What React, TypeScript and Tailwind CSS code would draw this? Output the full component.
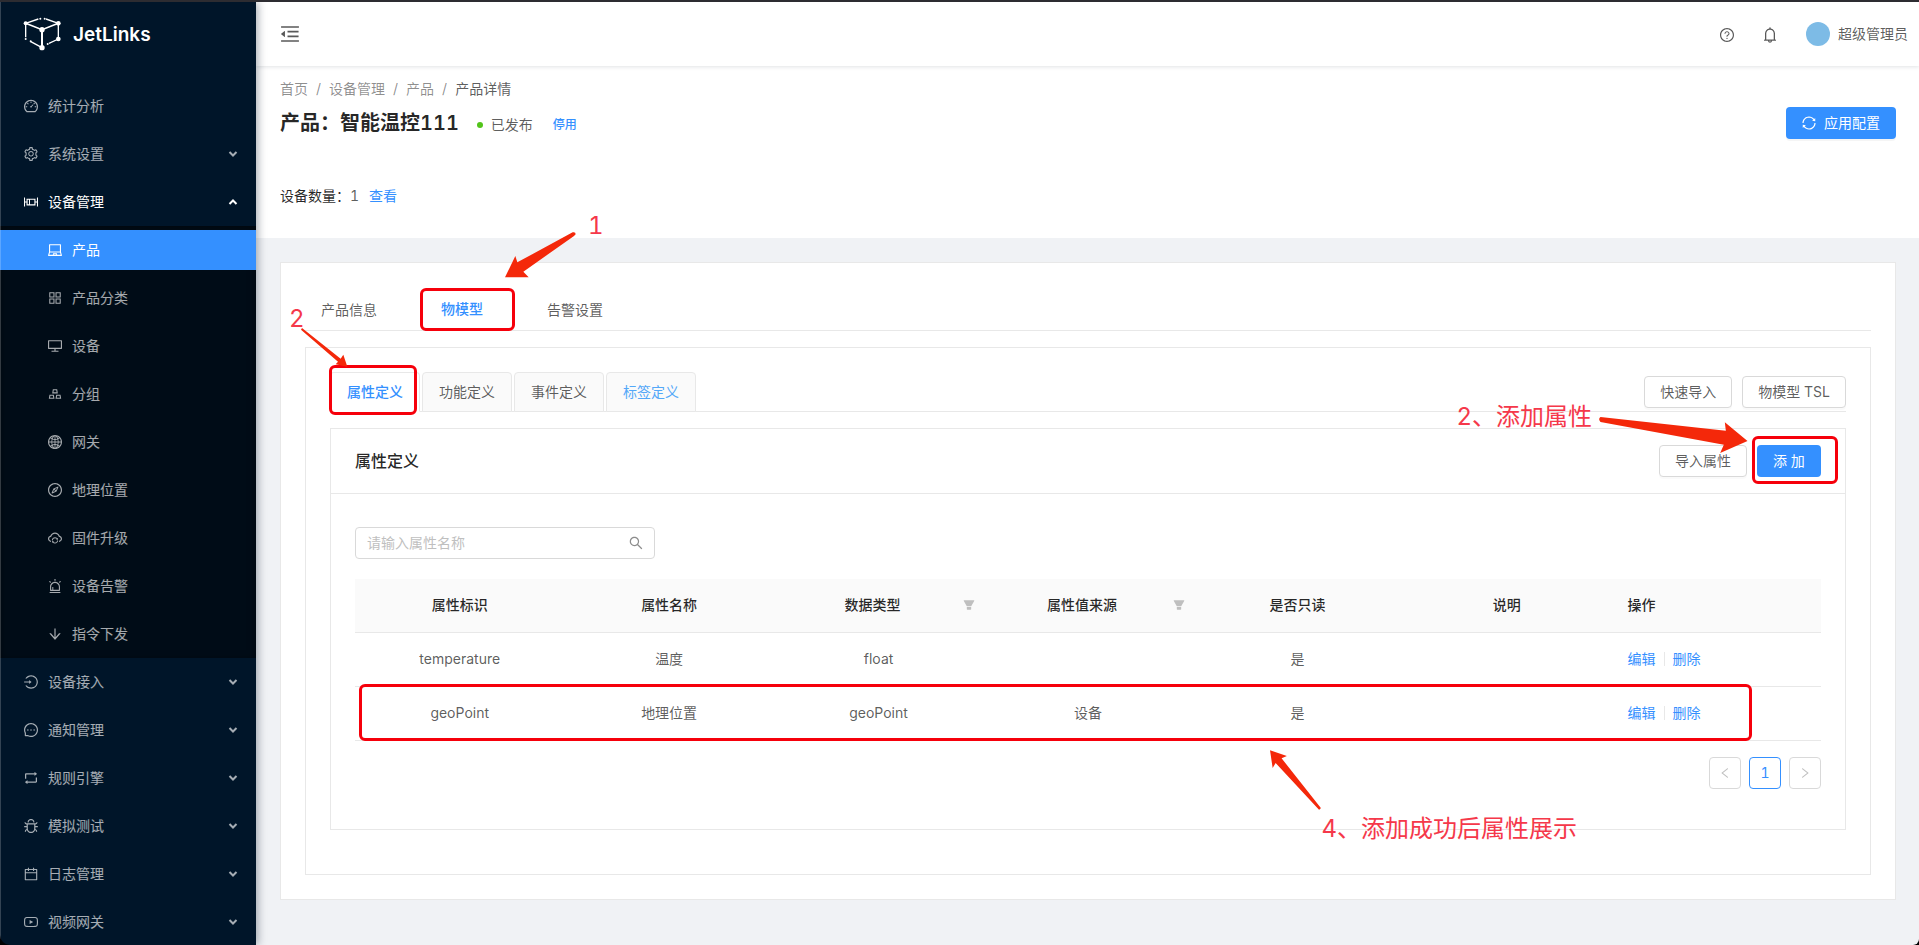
import React from 'react';
import type { IconType } from 'react-icons';
import {
  AiFillFilter,
  AiOutlineAlert,
  AiOutlineAppstore,
  AiOutlineArrowDown,
  AiOutlineBell,
  AiOutlineBoxPlot,
  AiOutlineBug,
  AiOutlineCalendar,
  AiOutlineCloudSync,
  AiOutlineCompass,
  AiOutlineDashboard,
  AiOutlineDesktop,
  AiOutlineGlobal,
  AiOutlineGold,
  AiOutlineLaptop,
  AiOutlineLeft,
  AiOutlineLogin,
  AiOutlineMenuFold,
  AiOutlineMessage,
  AiOutlineQuestionCircle,
  AiOutlineRetweet,
  AiOutlineRight,
  AiOutlineSearch,
  AiOutlineSetting,
  AiOutlineSync,
  AiOutlineYoutube,
} from 'react-icons/ai';

interface MenuEntry {
  label: string;
  icon: IconType;
  active?: boolean;
  open?: boolean;
  leaf?: boolean;
  children?: MenuEntry[];
}

interface Property {
  id: string;
  name: string;
  type: string;
  source: string;
  readOnly: string;
  description: string;
}

const menu: MenuEntry[] = [
  { label: '统计分析', icon: AiOutlineDashboard, leaf: true },
  { label: '系统设置', icon: AiOutlineSetting },
  {
    label: '设备管理',
    icon: AiOutlineBoxPlot,
    open: true,
    children: [
      { label: '产品', icon: AiOutlineLaptop, active: true },
      { label: '产品分类', icon: AiOutlineAppstore },
      { label: '设备', icon: AiOutlineDesktop },
      { label: '分组', icon: AiOutlineGold },
      { label: '网关', icon: AiOutlineGlobal },
      { label: '地理位置', icon: AiOutlineCompass },
      { label: '固件升级', icon: AiOutlineCloudSync },
      { label: '设备告警', icon: AiOutlineAlert },
      { label: '指令下发', icon: AiOutlineArrowDown },
    ],
  },
  { label: '设备接入', icon: AiOutlineLogin },
  { label: '通知管理', icon: AiOutlineMessage },
  { label: '规则引擎', icon: AiOutlineRetweet },
  { label: '模拟测试', icon: AiOutlineBug },
  { label: '日志管理', icon: AiOutlineCalendar },
  { label: '视频网关', icon: AiOutlineYoutube },
];

const properties: Property[] = [
  { id: 'temperature', name: '温度', type: 'float', source: '', readOnly: '是', description: '' },
  { id: 'geoPoint', name: '地理位置', type: 'geoPoint', source: '设备', readOnly: '是', description: '' },
];

const columns = [
  { title: '属性标识' },
  { title: '属性名称' },
  { title: '数据类型', filter: true },
  { title: '属性值来源', filter: true },
  { title: '是否只读' },
  { title: '说明' },
];

const Icon: React.FC<{ icon: IconType; size?: number }> = ({ icon: Glyph, size = 14 }) => (
  <Glyph size={size} viewBox="64 64 896 896" className="shrink-0" aria-hidden="true" />
);

const Logo: React.FC = () => (
  <svg width="38" height="34" viewBox="70 51 114 102" fill="none" stroke="white" strokeWidth="4" aria-hidden="true">
    <path d="M78 70 127 89 176 70" strokeWidth="5" />
    <path d="M127 89V143" strokeWidth="6" />
    <path d="M78 70 116 57M139 57 176 70M176 70V117M78 70V112" />
    <path d="M92 124 127 143M176 117 148 130" />
    <g fill="white" stroke="none">
      <circle cx="78" cy="70" r="6" />
      <circle cx="176" cy="70" r="7" />
      <circle cx="127" cy="89" r="8" />
      <circle cx="176" cy="117" r="7" />
      <circle cx="127" cy="143" r="8" />
      <circle cx="78" cy="117" r="3" />
      <circle cx="93" cy="124" r="3" />
      <circle cx="144" cy="132" r="3" />
      <circle cx="122" cy="56" r="3" />
      <circle cx="135" cy="56" r="3" />
    </g>
  </svg>
);

const MenuItem: React.FC<{ item: MenuEntry; nested?: boolean }> = ({ item, nested }) => {
  const tone = item.active ? 'bg-[#3490ff] text-white' : item.open ? 'text-white' : 'text-white/65';
  return (
    <li className="flow-root">
      <a href="#" className={`my-1 flex h-10 items-center gap-2.5 pr-[18px] ${nested ? 'pl-12' : 'pl-6'} ${tone}`}>
        <Icon icon={item.icon} />
        <span className="flex-1">{item.label}</span>
        {!nested && !item.leaf && (
          <svg
            width="10"
            height="8"
            viewBox="0 0 10 8"
            fill="none"
            stroke="currentColor"
            strokeWidth="2"
            className={item.open ? 'rotate-180' : ''}
            aria-hidden="true"
          >
            <path d="M1.5 2 5 5.5 8.5 2" />
          </svg>
        )}
      </a>
      {item.children && (
        <ul className="bg-[#000c17] shadow-[inset_0_2px_8px_rgba(0,0,0,0.45)]">
          {item.children.map((child) => (
            <MenuItem key={child.label} item={child} nested />
          ))}
        </ul>
      )}
    </li>
  );
};

const Sidebar: React.FC = () => (
  <aside className="relative z-10 w-64 shrink-0 overflow-hidden rounded-bl-[10px] bg-[#001529] shadow-[2px_0_8px_rgba(0,21,41,0.35)]">
    <a href="#" className="flex h-16 items-center gap-3 pl-[23px] text-white">
      <Logo />
      <span className="pt-0.5 text-[19px] font-semibold">JetLinks</span>
    </a>
    <nav className="pt-4">
      <ul>
        {menu.map((item) => (
          <MenuItem key={item.label} item={item} />
        ))}
      </ul>
    </nav>
    <div className="pointer-events-none absolute inset-y-0 left-0 w-px bg-white/20" />
  </aside>
);

const Header: React.FC = () => (
  <header className="relative flex h-16 items-center justify-between bg-white pr-[11px] pl-6 shadow-[0_1px_4px_rgba(0,21,41,0.12)]">
    <button type="button" aria-label="收起菜单">
      <Icon icon={AiOutlineMenuFold} size={20} />
    </button>
    <div className="flex items-center">
      <button type="button" aria-label="帮助" className="mr-7 pt-0.5">
        <Icon icon={AiOutlineQuestionCircle} />
      </button>
      <button type="button" aria-label="通知" className="mr-7 pt-0.5">
        <Icon icon={AiOutlineBell} size={16} />
      </button>
      <button type="button" className="flex items-center gap-2">
        <span className="size-6 rounded-full bg-[#7dbbe6]" />
        超级管理员
      </button>
    </div>
  </header>
);

const crumbs = ['首页', '设备管理', '产品', '产品详情'];

const PageHeader: React.FC = () => (
  <section className="h-[172px] bg-white pt-3 pr-[23px] pl-6">
    <ol className="flex gap-2 text-black/45 normal-nums">
      {crumbs.map((crumb, index) => (
        <li key={crumb} className="flex gap-2">
          {index > 0 && <span>/</span>}
          <a href="#" className={index === crumbs.length - 1 ? 'text-black/65' : ''}>
            {crumb}
          </a>
        </li>
      ))}
    </ol>
    <div className="mt-[7px] flex items-center justify-between">
      <div className="flex items-center">
        <h1 className="text-xl font-semibold text-black/85">产品：智能温控111</h1>
        <span className="ml-[18px] flex items-center gap-2 pt-1">
          <span className="size-1.5 rounded-full bg-[#52c41a]" />
          已发布
        </span>
        <a href="#" className="ml-5 pt-1 text-xs font-medium text-[#3490ff]">
          停用
        </a>
      </div>
      <button
        type="button"
        className="flex h-8 items-center gap-2 rounded bg-[#3490ff] px-4 text-white shadow-[0_2px_0_rgba(0,0,0,0.04)]"
      >
        <Icon icon={AiOutlineSync} />
        应用配置
      </button>
    </div>
    <p className="mt-[46px] flex text-black/85">
      设备数量：
      <span className="mr-2.5 text-black/65">1</span>
      <a href="#" className="text-[#3490ff]">
        查看
      </a>
    </p>
  </section>
);

const OutlineButton: React.FC<{ children: React.ReactNode }> = ({ children }) => (
  <button
    type="button"
    className="h-8 rounded border border-[#d9d9d9] bg-white px-[15px] shadow-[0_2px_0_rgba(0,0,0,0.02)]"
  >
    {children}
  </button>
);

// Red frame drawn over the step being explained
const Frame: React.FC<{ className: string }> = ({ className }) => (
  <div className={`pointer-events-none absolute z-10 rounded-md border-3 border-[#f6000b] ${className}`} />
);

const Note: React.FC<{ className: string; children: React.ReactNode }> = ({ className, children }) => (
  <span className={`pointer-events-none absolute z-10 text-2xl leading-8 whitespace-nowrap text-[#f5384a] ${className}`}>
    {children}
  </span>
);

const Arrow: React.FC<{ className: string; viewBox: string; d: string }> = ({ className, viewBox, d }) => (
  <svg viewBox={viewBox} fill="#f4280a" className={`pointer-events-none absolute z-10 ${className}`} aria-hidden="true">
    <path d={d} />
  </svg>
);

const PropertyTable: React.FC = () => (
  <div className="relative mt-5">
    <table className="w-full table-fixed text-center">
      <thead>
        <tr className="border-b border-[#e8e8e8] bg-[#fafafa] text-black/85">
          {columns.map((column) => (
            <th key={column.title} className="h-[53px] px-4 font-medium">
              {column.filter ? (
                <span className="flex items-center">
                  <span className="flex-1">{column.title}</span>
                  <button type="button" aria-label="筛选" className="-mr-2 ml-2 text-[#bfbfbf]">
                    <Icon icon={AiFillFilter} size={12} />
                  </button>
                </span>
              ) : (
                column.title
              )}
            </th>
          ))}
          <th className="px-4 text-left font-medium">操作</th>
        </tr>
      </thead>
      <tbody>
        {properties.map((row) => (
          <tr key={row.id} className="border-b border-[#e8e8e8]">
            <td className="h-[54px] px-4">{row.id}</td>
            <td className="px-4">{row.name}</td>
            <td className="px-4">{row.type}</td>
            <td className="px-4">{row.source}</td>
            <td className="px-4">{row.readOnly}</td>
            <td className="px-4">{row.description}</td>
            <td className="px-4">
              <span className="flex items-center text-[#3490ff]">
                <a href="#">编辑</a>
                <span className="mx-2 h-3.5 w-px bg-[#e8e8e8]" />
                <a href="#">删除</a>
              </span>
            </td>
          </tr>
        ))}
      </tbody>
    </table>
    <Frame className="right-[69px] bottom-0 left-1 h-[57px]" />
  </div>
);

const Pagination: React.FC = () => (
  <div className="mt-4 flex justify-end gap-2">
    <button
      type="button"
      aria-label="上一页"
      className="flex size-8 items-center justify-center rounded border border-[#d9d9d9] text-black/25"
    >
      <Icon icon={AiOutlineLeft} size={12} />
    </button>
    <button type="button" className="size-8 rounded border border-[#3490ff] text-[#3490ff]">
      1
    </button>
    <button
      type="button"
      aria-label="下一页"
      className="flex size-8 items-center justify-center rounded border border-[#d9d9d9] text-black/25"
    >
      <Icon icon={AiOutlineRight} size={12} />
    </button>
  </div>
);

const PropertyCard: React.FC = () => (
  <section className="relative mt-4 border border-[#e8e8e8]">
    <header className="flex h-[65px] items-center justify-between border-b border-[#e8e8e8] px-6">
      <h2 className="text-base font-medium text-black/85">属性定义</h2>
      <div className="flex gap-2.5">
        <OutlineButton>导入属性</OutlineButton>
        <div className="relative">
          <button type="button" className="h-8 w-16 rounded bg-[#3490ff] text-white">
            添 加
          </button>
          <Frame className="-top-[9px] -left-[5px] h-12 w-[86px]" />
        </div>
      </div>
    </header>
    <div className="px-6 pt-[33px] pb-10">
      <label className="flex h-8 w-[300px] items-center rounded border border-[#d9d9d9] px-[11px] text-black/45">
        <input
          type="text"
          aria-label="属性名称"
          placeholder="请输入属性名称"
          className="min-w-0 flex-1 outline-none placeholder:text-[#bfbfbf]"
        />
        <Icon icon={AiOutlineSearch} />
      </label>
      <PropertyTable />
      <Pagination />
    </div>
    <Note className="-top-7 right-[253px]">2、添加属性</Note>
    <Arrow
      className="-top-3 right-[97px] h-9 w-[149px]"
      viewBox="0 0 446 108"
      d="M4 0 380 41 377 16 445 72 363 108 374 83 4 15Q-4 6 4 0Z"
    />
    <Note className="right-[268px] -bottom-4">4、添加成功后属性展示</Note>
    <Arrow
      className="right-[524px] bottom-[19px] h-[60px] w-[51px]"
      viewBox="0 0 154 179"
      d="M0 0 51 17 35 24 153 173Q154 178 148 179L17 38 8 53Z"
    />
  </section>
);

const modelTabs = ['属性定义', '功能定义', '事件定义', '标签定义'];

const ModelPanel: React.FC = () => (
  <section className="mt-4 border border-[#e8e8e8] px-6 pt-6 pb-11">
    <div className="relative flex items-end justify-between border-b border-[#e8e8e8]">
      <div role="tablist" className="flex gap-0.5">
        {modelTabs.map((tab, index) => (
          <button
            key={tab}
            type="button"
            role="tab"
            aria-selected={index === 0}
            className={`-mb-px h-10 rounded-t border border-[#e8e8e8] px-4 ${
              index === 0 ? 'border-b-white bg-white font-medium text-[#3490ff]' : 'bg-[#fafafa]'
            } ${index === 3 ? 'text-[#54a8f8]' : ''}`}
          >
            {tab}
          </button>
        ))}
      </div>
      <div className="flex gap-2.5 pb-[3px]">
        <OutlineButton>快速导入</OutlineButton>
        <OutlineButton>物模型 TSL</OutlineButton>
      </div>
      <Frame className="-top-[7px] -left-px h-[50px] w-[88px]" />
    </div>
    <PropertyCard />
  </section>
);

const pageTabs = ['产品信息', '物模型', '告警设置'];

const Content: React.FC = () => (
  <main className="py-6 pr-[23px] pl-6">
    <div className="relative border border-[#e8e8e8] bg-white p-6">
      <div role="tablist" className="flex gap-8 border-b border-[#e8e8e8]">
        {pageTabs.map((tab, index) => (
          <button
            key={tab}
            type="button"
            role="tab"
            aria-selected={index === 1}
            className={`relative -mb-px h-11 px-4 pt-0.5 ${
              index === 1 ? 'border-b-2 border-[#3490ff] font-medium text-[#3490ff]' : ''
            }`}
          >
            {tab}
            {index === 1 && <Frame className="top-px -left-[5px] h-[43px] w-[95px]" />}
          </button>
        ))}
      </div>
      <ModelPanel />
      <Note className="-top-[53px] left-[307px]">1</Note>
      <Arrow
        className="-top-[31px] left-[224px] h-[46px] w-[71px]"
        viewBox="0 0 213 138"
        d="M203 1Q212 -1 212 7L207 12 55 119 71 136H0L31 72 37 91Z"
      />
      <Note className="top-10 left-2">2</Note>
      <Arrow
        className="top-[65px] left-5 h-[39px] w-[47px]"
        viewBox="0 0 141 117"
        d="M3 0 119 92 127 80 139 116 104 109 111 101 0 5Z"
      />
    </div>
  </main>
);

const App: React.FC = () => (
  <div className="flex h-screen overflow-hidden border-t-2 border-[#2d2c31] bg-black text-sm leading-[22px] text-black/65 tabular-nums [font-family:Inter,'Noto_Sans_CJK_SC',sans-serif]">
    <Sidebar />
    <div className="min-w-0 flex-1 overflow-hidden rounded-br-md bg-[#f0f2f5]">
      <Header />
      <PageHeader />
      <Content />
    </div>
  </div>
);

export default App;
